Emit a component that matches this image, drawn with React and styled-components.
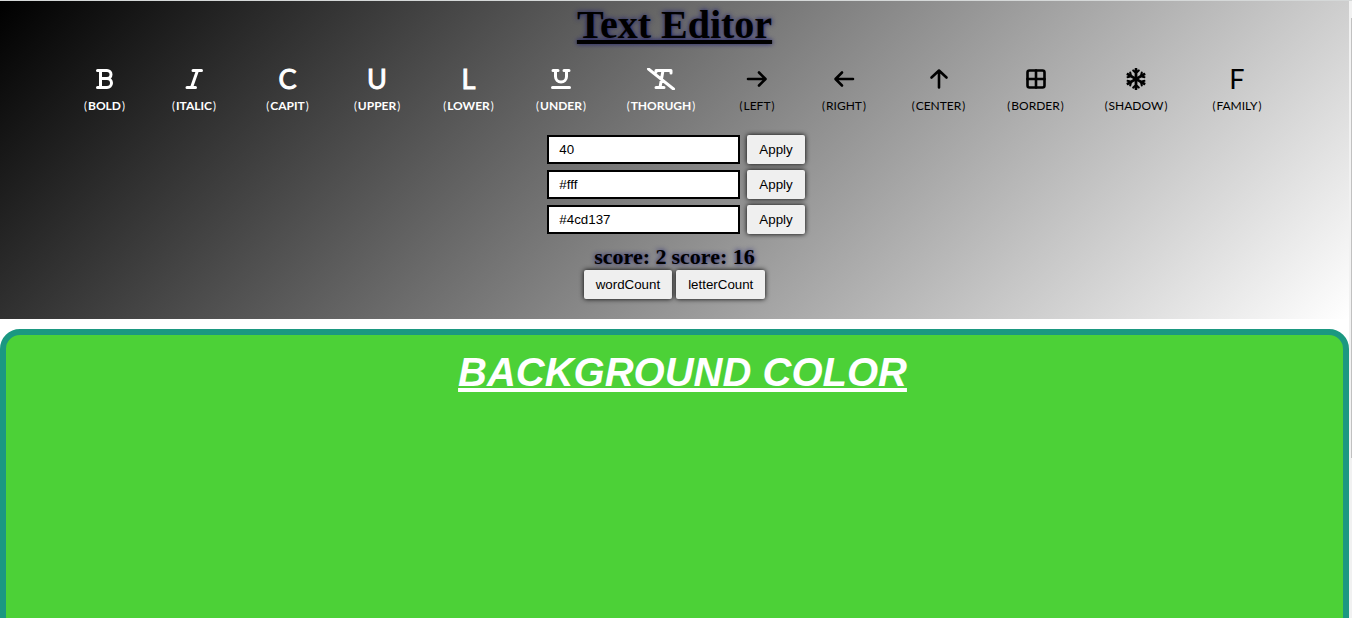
import React from "react";
import styled, { createGlobalStyle } from "styled-components";
import { FaSnowflake } from "react-icons/fa";

const GlobalStyle = createGlobalStyle`
  * { box-sizing: border-box; }
  body { margin: 0; background: #fff; overflow: hidden; }
`;

const Page = styled.div`
  display: grid;
  grid-template-columns: minmax(0, 1fr) 3px;
  height: 100vh;
  border-top: 1px solid #d5d8d8;
`;

const Content = styled.main`
  display: flex;
  flex-direction: column;
  gap: 10px;
  overflow: hidden;
`;

const ScrollTrack = styled.div`
  background: #f1f1f1;
  padding: 17px 0 160px 2px;
`;

const ScrollThumb = styled.div`
  height: 100%;
  background: #c1c1c1;
`;

const Header = styled.header`
  flex: none;
  display: flex;
  flex-direction: column;
  align-items: center;
  padding-bottom: 20px;
  background: linear-gradient(135deg, #000, #fff);
`;

const Title = styled.h1`
  margin: 0;
  font: bold 40px/48px "Liberation Serif", serif;
  text-decoration: underline;
  text-shadow: 0 0 5px #191970;
`;

const Toolbar = styled.nav`
  display: flex;
  justify-content: center;
  gap: 42px;
  padding-top: 19px;
`;

const Tool = styled.button`
  display: flex;
  flex-direction: column;
  align-items: center;
  gap: 8px;
  width: ${(p) => p.$width}px;
  padding: 0;
  border: 0;
  background: none;
  color: ${(p) => (p.$active ? "#fff" : "#000")};
  font: ${(p) => (p.$active ? 700 : 400)} 12px/16px Lato, sans-serif;
  white-space: nowrap;

  svg { stroke-width: ${(p) => (p.$active ? 3 : 2.6)}; }
`;

const ToolIcon = styled.span`
  display: grid;
  place-items: center;
  height: 22px;
  font: 400 27px/22px Lato, sans-serif;
  -webkit-text-stroke: ${(p) => (p.$active ? "1px" : "0")} currentColor;

  svg { display: block; }
`;

const ToolLabel = styled.span`
  display: flex;
  gap: 1px;
`;

const Paren = styled.span`
  font-weight: 400;
  font-size: 11px;
`;

const Controls = styled.div`
  display: flex;
  flex-direction: column;
  gap: 6px;
  padding: 21px 0 0 3px;
`;

const Field = styled.form`
  display: flex;
  gap: 7px;
`;

const Input = styled.input`
  width: 193px;
  height: 29px;
  padding: 0 10px;
  border: 2px solid #000;
  background: #fff;
  color: #000;
  font-family: "Liberation Sans", Arial, sans-serif;
`;

const Button = styled.button`
  height: 29px;
  padding: 0 12px;
  border: 0;
  border-radius: 2px;
  background: #efefef;
  color: #000;
  box-shadow: 0 0 5px #000;
  font-family: "Liberation Sans", Arial, sans-serif;
`;

const Scores = styled.div`
  display: flex;
  gap: 5px;
  padding-top: 10px;
`;

const Score = styled.output`
  font: bold 22px/26px "Liberation Serif", serif;
  text-shadow: 0 0 5px #191970;
`;

const Counters = styled.div`
  display: flex;
  gap: 4px;
`;

const Editor = styled.textarea`
  flex: 1;
  display: block;
  width: 100%;
  margin-bottom: -30px;
  padding: 14px 0 0 16px;
  border: 6px solid #1b9881;
  border-radius: 20px;
  outline: 0;
  resize: none;
  background: #4cd137;
  color: #fff;
  font: italic bold 40px/46px "Liberation Sans", Arial, sans-serif;
  text-align: center;
  text-transform: uppercase;
  text-decoration: underline;
`;

const Stroke = ({ children, width = 24 }) => (
  <svg width={width} height="22" viewBox={`0 0 ${width} 22`} fill="none" stroke="currentColor"
    strokeLinecap="round" strokeLinejoin="round" aria-hidden="true">
    {children}
  </svg>
);

const icons = {
  bold: <Stroke><path d="M4.500 2.500H14a4 4 0 0 1 0 8H7.500M14 10.500a4.500 4.500 0 0 1 0 9H4.500M7.500 2.500v17" /></Stroke>,
  italic: <Stroke><path d="M11 2.500h8.500M5 19.500h8.500M15.500 2.500l-6 17" /></Stroke>,
  under: <Stroke><path d="M4 2.500h5M15 2.500h5M6.500 2.500v6a5.500 5.500 0 0 0 11 0v-6M3.500 19.500h17" /></Stroke>,
  through: <Stroke width={30}><path d="M2.500 1l25 20M10 4V2.500h15V5M17 2.500l-3 17M10 19.500h8" /></Stroke>,
  arrowRight: <Stroke><path d="M3 11h17M14 4.500l6.500 6.500-6.500 6.500" /></Stroke>,
  arrowLeft: <Stroke><path d="M21 11H4M10 4.500L3.500 11l6.500 6.500" /></Stroke>,
  arrowUp: <Stroke><path d="M12 19.500V3M4.500 9.500L12 2.500l7.500 7" /></Stroke>,
  border: <Stroke><rect x="3.500" y="2.500" width="17" height="17" rx="2" /><path d="M12 2.500v17M3.500 11h17" /></Stroke>,
  shadow: <FaSnowflake size={22} stroke="none" aria-hidden="true" />,
};

const tools = [
  { label: "BOLD", icon: icons.bold, width: 41, active: true },
  { label: "ITALIC", icon: icons.italic, width: 54, active: true },
  { label: "CAPIT", icon: "C", width: 49, active: true },
  { label: "UPPER", icon: "U", width: 46, active: true },
  { label: "LOWER", icon: "L", width: 53, active: true },
  { label: "UNDER", icon: icons.under, width: 48, active: true },
  { label: "THORUGH", icon: icons.through, width: 68, active: true },
  { label: "LEFT", icon: icons.arrowRight, width: 40 },
  { label: "RIGHT", icon: icons.arrowLeft, width: 50 },
  { label: "CENTER", icon: icons.arrowUp, width: 55 },
  { label: "BORDER", icon: icons.border, width: 55 },
  { label: "SHADOW", icon: icons.shadow, width: 62 },
  { label: "FAMILY", icon: "F", width: 56 },
];

const fields = [
  { label: "Font size", value: "40" },
  { label: "Text color", value: "#fff" },
  { label: "Background color", value: "#4cd137" },
];

export default function App() {
  return (
    <>
      <GlobalStyle />
      <Page>
        <Content>
          <Header>
            <Title>Text Editor</Title>
            <Toolbar aria-label="Text formatting">
              {tools.map((t) => (
                <Tool key={t.label} type="button" $width={t.width} $active={t.active}>
                  <ToolIcon $active={t.active}>{t.icon}</ToolIcon>
                  <ToolLabel>
                    <Paren>(</Paren>
                    {t.label}
                    <Paren>)</Paren>
                  </ToolLabel>
                </Tool>
              ))}
            </Toolbar>
            <Controls>
              {fields.map((f) => (
                <Field key={f.label} onSubmit={(e) => e.preventDefault()}>
                  <Input type="text" aria-label={f.label} defaultValue={f.value} />
                  <Button>Apply</Button>
                </Field>
              ))}
            </Controls>
            <Scores>
              <Score>score: 2</Score>
              <Score>score: 16</Score>
            </Scores>
            <Counters>
              <Button type="button">wordCount</Button>
              <Button type="button">letterCount</Button>
            </Counters>
          </Header>
          <Editor aria-label="Editor" defaultValue="background color" spellCheck={false} />
        </Content>
        <ScrollTrack aria-hidden="true">
          <ScrollThumb />
        </ScrollTrack>
      </Page>
    </>
  );
}
